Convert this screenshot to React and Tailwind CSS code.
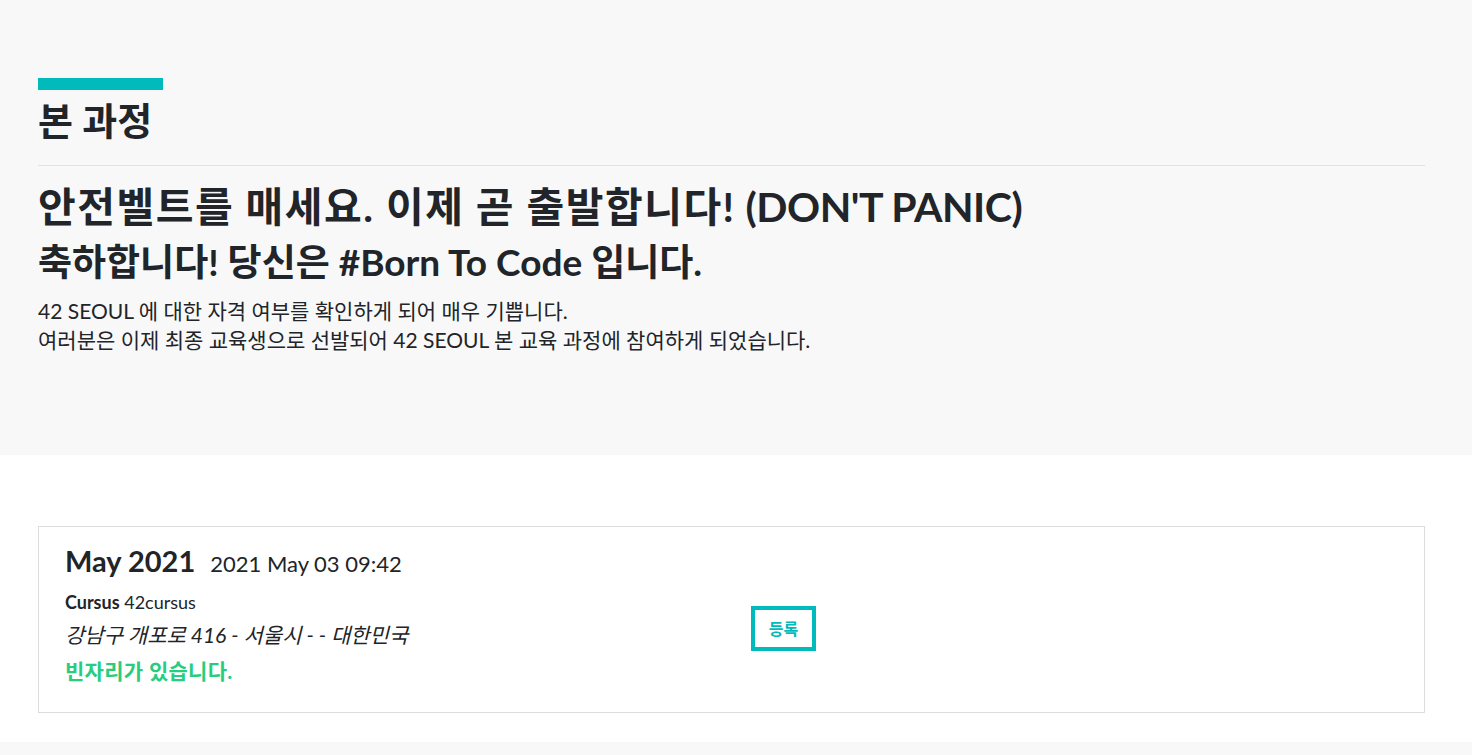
export default function App() {
  const font = { fontFamily: '"Lato", "Noto Sans CJK KR", sans-serif' };
  return (
    <div className="w-[1472px] min-h-[755px] bg-[#f8f8f8] text-[#212428]" style={font}>
      <section className="bg-[#f8f8f8] pl-[38px] pr-[47px] pt-[78px] h-[455px]">
        <div className="h-[12px] w-[125px] bg-[#00babc]" />
        <h2 className="mt-[8px] text-[38px] font-bold leading-[44px]">본 과정</h2>
        <div className="mt-[23px] h-px bg-[#e2e2e2]" />
        <h1 className="mt-[14px] text-[41px] font-bold leading-[54px]">
          <span className="tracking-[1.5px]">안전벨트를 매세요. 이제 곧 출발합니다!</span>{" "}
          <span className="tracking-[-0.5px]">(DON'T PANIC)</span>
        </h1>
        <h3 className="mt-[4px] text-[37px] font-bold leading-[48px]">
          축하합니다! 당신은 #Born To Code 입니다.
        </h3>
        <p className="mt-[10px] text-[21px] leading-[29px]">
          42 SEOUL 에 대한 자격 여부를 확인하게 되어 매우 기쁩니다.
          <br />
          여러분은 이제 최종 교육생으로 선발되어 42 SEOUL 본 교육 과정에 참여하게 되었습니다.
        </p>
      </section>
      <section className="bg-white pl-[38px] pr-[47px] pt-[71px] pb-[29px]">
        <div className="flex items-start border border-[#dddddd] bg-white h-[187px] pl-[26px] pt-[16px]">
          <div className="w-[686px] flex flex-col">
            <div className="flex items-baseline gap-[15px] leading-[36px]">
              <span className="text-[29px] font-bold">May 2021</span>
              <span className="text-[22px]">2021 May 03 09:42</span>
            </div>
            <div className="mt-[8px] text-[18px] leading-[24px]">
              <span className="font-bold">Cursus</span> 42cursus
            </div>
            <div className="mt-[6px] text-[21px] leading-[30px] italic">강남구 개포로 416 - 서울시 - - 대한민국</div>
            <div className="mt-[6px] text-[21px] leading-[30px] font-bold tracking-[0.3px] text-[#27cd7d]">빈자리가 있습니다.</div>
          </div>
          <button className="mt-[63px] border-[4px] border-[#00babc] w-[65px] h-[45px] text-[16px] font-bold text-[#00babc] bg-white">
            등록
          </button>
        </div>
      </section>
      <div className="h-[13px] bg-[#f8f8f8]" />
    </div>
  );
}
